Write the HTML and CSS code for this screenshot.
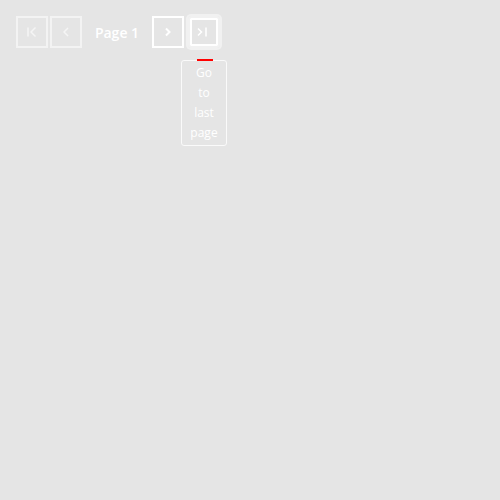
FILE: index.html
```html
<!DOCTYPE html>
<html>
<head>
<meta charset="utf-8">
<link rel="stylesheet" href="styles.css">
</head>
<body>
<div class="pager">
  <button class="btn disabled" aria-label="Go to first page">
    <svg width="32" height="32" viewBox="0 0 32 32"><path d="M12 11.5v9" stroke="currentColor" stroke-width="1.5" fill="none"/><path d="M19.5 11.5l-4.5 4.5 4.5 4.5" stroke="currentColor" stroke-width="1.5" fill="none"/></svg>
  </button>
  <button class="btn disabled" aria-label="Go to previous page">
    <svg width="32" height="32" viewBox="0 0 32 32"><path d="M18 12l-4 4 4 4" stroke="currentColor" stroke-width="1.5" fill="none"/></svg>
  </button>
  <span class="label">Page 1</span>
  <button class="btn" aria-label="Go to next page">
    <svg width="32" height="32" viewBox="0 0 32 32"><path d="M14 12.5l3.5 3.5-3.5 3.5" stroke="currentColor" stroke-width="2" fill="none"/></svg>
  </button>
  <div class="wrap">
    <button class="btn focused" aria-label="Go to last page">
      <svg width="32" height="32" viewBox="0 0 32 32"><path d="M10 12.5l3.5 3.5-3.5 3.5" stroke="currentColor" stroke-width="1.5" fill="none"/><path d="M18 11.5v9" stroke="currentColor" stroke-width="1.5" fill="none"/></svg>
    </button>
    <div class="tip"><span>Go</span><span>to</span><span>last</span><span>page</span></div>
  </div>
</div>
</body>
</html>
```
FILE: styles.css
```css
html, body {
  margin: 0;
  background: #e5e5e5;
}
html {
  height: 100%;
}
body {
  min-height: 100%;
  box-sizing: border-box;
  padding: 16px;
  font-family: "Open Sans", sans-serif;
}
.pager {
  display: flex;
  align-items: center;
  gap: 2px;
}
.btn {
  width: 32px;
  height: 32px;
  padding: 0;
  margin: 0;
  border: 2px solid #fff;
  background: transparent;
  color: #fff;
  display: flex;
  align-items: center;
  justify-content: center;
  box-sizing: border-box;
}
.btn svg {
  flex: none;
  display: block;
}
.btn.disabled {
  border-color: #f3f3f3;
  color: #f5f5f5;
}
.label {
  width: 66px;
  text-align: center;
  color: #fff;
  font-size: 14px;
  font-weight: 600;
}
.wrap {
  position: relative;
  margin-left: 2px;
}
.btn.focused {
  border-color: #f1f1f1;
  border-radius: 3px;
  box-shadow: 0 0 0 2px #f1f1f1, inset 0 0 0 2px #fff;
}
.tip {
  position: absolute;
  top: 44px;
  left: -7px;
  width: 44px;
  padding: 2px 0 2px;
  border: 1px solid #fafafa;
  border-radius: 3px;
  color: #fff;
  font-family: "Open Sans", sans-serif;
  font-size: 12px;
  line-height: 20px;
  text-align: center;
  display: flex;
  flex-direction: column;
  align-items: center;
}
.tip::before {
  content: "";
  position: absolute;
  top: -2px;
  left: 15px;
  width: 16px;
  height: 2px;
  background: #ff0000;
}
```
